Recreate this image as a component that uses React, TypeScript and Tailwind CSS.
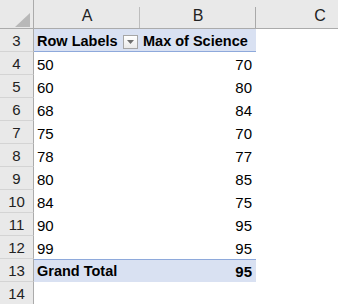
import React from "react";

const rows: [string, string, string][] = [
  ["4", "50", "70"],
  ["5", "60", "80"],
  ["6", "68", "84"],
  ["7", "75", "70"],
  ["8", "78", "77"],
  ["9", "80", "85"],
  ["10", "84", "75"],
  ["11", "90", "95"],
  ["12", "99", "95"],
];

function RowHead({ n, last }: { n: string; last?: boolean }) {
  return (
    <div
      className={
        "w-[34px] shrink-0 bg-[#e9e9e9] border-r border-[#ababab] flex items-center justify-center text-[15px] text-[#222] pt-[3px] " +
        (last ? "" : "border-b border-b-[#d4d4d4]")
      }
    >
      {n}
    </div>
  );
}

function DropButton() {
  return (
    <div className="ml-[5px] w-[15px] h-[14px] border border-[#a6a6a6] bg-gradient-to-b from-white to-[#eaeaea] flex items-center justify-center">
      <svg width="7" height="4" viewBox="0 0 7 4">
        <path d="M0 0 L7 0 L3.5 4 Z" fill="#6f6f6f" />
      </svg>
    </div>
  );
}

export default function App() {
  return (
    <div
      className="w-[338px] h-[304px] overflow-hidden bg-white text-black"
      style={{ fontFamily: '"Liberation Sans", Arial, sans-serif' }}
    >
      {/* column header */}
      <div className="flex h-[29px] bg-[#e9e9e9] border-b border-[#ababab]">
        <div className="w-[34px] shrink-0 border-r border-[#ababab] relative">
          <svg className="absolute left-[15px] top-[13px]" width="15" height="14" viewBox="0 0 15 14">
            <path d="M15 0 L15 14 L0 14 Z" fill="#b8b8b8" />
          </svg>
        </div>
        <div className="w-[106px] shrink-0 flex items-center justify-center text-[16px] text-[#222] pt-[3px] relative">
          A
          <div className="absolute right-0 top-[7px] bottom-0 w-px bg-[#bdbdbd]" />
        </div>
        <div className="w-[116px] shrink-0 flex items-center justify-center text-[16px] text-[#222] pt-[3px] relative">
          B
          <div className="absolute right-0 top-[7px] bottom-0 w-px bg-[#a9a9a9]" />
        </div>
        <div className="w-[128px] shrink-0 flex items-center justify-center text-[16px] text-[#222] pt-[3px]">
          C
        </div>
      </div>

      {/* row 3 - pivot header */}
      <div className="flex h-[23px]">
        <RowHead n="3" />
        <div className="flex w-[222px] shrink-0 bg-[#d9e1f2] border-b border-[#8ea9db] font-bold text-[14.5px]">
          <div className="w-[106px] shrink-0 flex items-center pl-[3px] pt-[3px]">
            Row Labels
            <DropButton />
          </div>
          <div className="w-[116px] shrink-0 flex items-center pl-[3px] pt-[3px]">Max of Science</div>
        </div>
      </div>

      {rows.map(([n, a, b]) => (
        <div key={n} className="flex h-[23px]">
          <RowHead n={n} />
          <div className="w-[106px] shrink-0 flex items-center pl-[3px] pt-[3px] text-[15px]">{a}</div>
          <div className="w-[116px] shrink-0 flex items-center justify-end pr-[4px] pt-[3px] text-[15px]">{b}</div>
        </div>
      ))}

      {/* grand total */}
      <div className="flex h-[23px]">
        <RowHead n="13" />
        <div className="flex w-[222px] shrink-0 bg-[#d9e1f2] border-t border-[#8ea9db] font-bold text-[14.5px]">
          <div className="w-[106px] shrink-0 flex items-center pl-[3px] pt-[2px]">Grand Total</div>
          <div className="w-[116px] shrink-0 flex items-center justify-end pr-[4px] pt-[2px] text-[15px]">95</div>
        </div>
      </div>

      <div className="flex h-[23px]">
        <RowHead n="14" />
      </div>
    </div>
  );
}
